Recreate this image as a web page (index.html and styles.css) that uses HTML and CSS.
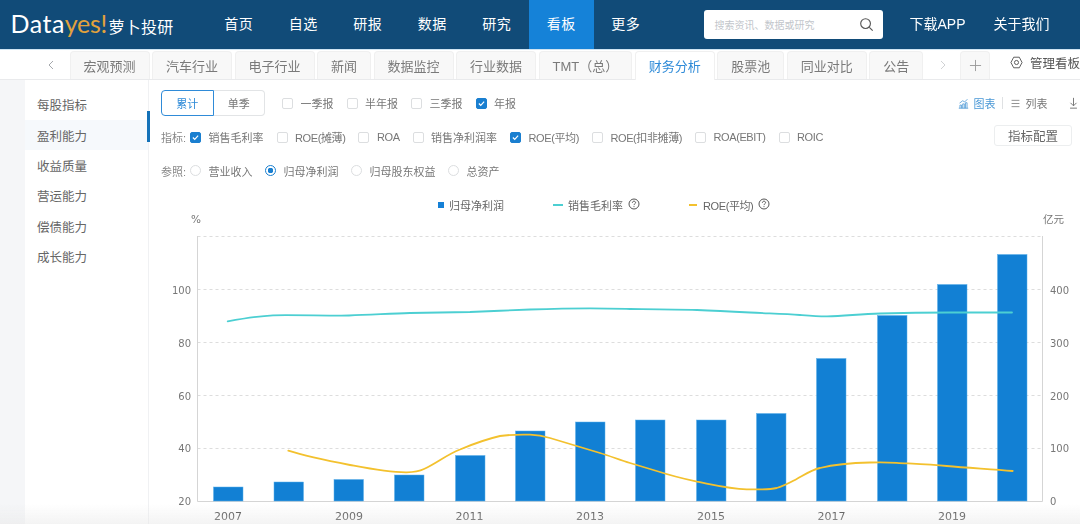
FILE: index.html
```html
<!DOCTYPE html>
<html lang="zh-CN">
<head>
<meta charset="utf-8">
<title>Datayes! 萝卜投研</title>
<link rel="stylesheet" href="styles.css">
</head>
<body>
<div class="app">
  <header class="header">
    <div class="logo"><span class="logo-data">Data</span><span class="logo-yes">yes!</span><span class="logo-cn">萝卜投研</span></div>
    <nav class="nav">
      <a class="nav-item">首页</a><a class="nav-item">自选</a><a class="nav-item">研报</a><a class="nav-item">数据</a><a class="nav-item">研究</a><a class="nav-item active">看板</a><a class="nav-item">更多</a>
    </nav>
    <div class="search">
      <span class="search-text">搜索资讯、数据或研究</span>
      <svg class="search-icon" viewBox="0 0 16 16"><circle cx="7" cy="7" r="5.2"/><path d="M11 11l3.6 3.6"/></svg>
    </div>
    <div class="header-links"><a>下载APP</a><a>关于我们</a></div>
  </header>

  <div class="tabbar">
    <svg class="tab-arrow first" viewBox="0 0 8 12"><path d="M6 2L2 6l4 4"/></svg>
    <div class="tabs">
      <span class="tab">宏观预测</span><span class="tab">汽车行业</span><span class="tab">电子行业</span><span class="tab">新闻</span><span class="tab">数据监控</span><span class="tab">行业数据</span><span class="tab">TMT（总）</span><span class="tab active">财务分析</span><span class="tab">股票池</span><span class="tab">同业对比</span><span class="tab">公告</span>
    </div>
    <svg class="tab-arrow last" viewBox="0 0 8 12"><path d="M2 2l4 4-4 4"/></svg>
    <span class="tab tab-add"><svg viewBox="0 0 14 14"><path d="M7 1v12M1 7h12"/></svg></span>
    <div class="manage">
      <svg viewBox="0 0 14 14"><path d="M4 1.3h6L13 7l-3 5.7H4L1 7z"/><circle cx="7" cy="7" r="2.2"/></svg>
      <span>管理看板</span>
    </div>
  </div>

  <div class="body">
    <aside class="sidebar">
      <div class="side-item">每股指标</div>
      <div class="side-item active">盈利能力</div>
      <div class="side-item">收益质量</div>
      <div class="side-item">营运能力</div>
      <div class="side-item">偿债能力</div>
      <div class="side-item">成长能力</div>
    </aside>
    <main class="main">
      <div class="row row-top">
        <div class="btn-group"><span class="seg active">累计</span><span class="seg">单季</span></div>
        <div class="opts period">
          <label class="opt"><i class="box"></i>一季报</label>
          <label class="opt"><i class="box"></i>半年报</label>
          <label class="opt"><i class="box"></i>三季报</label>
          <label class="opt"><i class="box on"><svg viewBox="0 0 12 12"><path d="M2.5 6l2.5 2.6 4.5-5"/></svg></i>年报</label>
        </div>
        <div class="views">
          <span class="view active"><svg viewBox="0 0 14 14"><path d="M1 13h12M2.5 13V9h2v4M6 13V7.5h2V13M9.5 13V6h2v7M2 6.5L6 3.5l2.5 1.5L12 1.5"/></svg>图表</span>
          <i class="view-sep"></i>
          <span class="view"><svg viewBox="0 0 14 14"><path d="M2 3h10M2 7h10M2 11h10"/></svg>列表</span>
          <svg class="download" viewBox="0 0 10 14"><path d="M5 1v9M1.5 6.8L5 10.3l3.5-3.5M1 13h8"/></svg>
        </div>
      </div>
      <div class="row row-metric">
        <span class="row-label">指标:</span>
        <div class="opts metrics">
          <label class="opt"><i class="box on"><svg viewBox="0 0 12 12"><path d="M2.5 6l2.5 2.6 4.5-5"/></svg></i>销售毛利率</label>
          <label class="opt"><i class="box"></i><span class="narrow">ROE(摊薄)</span></label>
          <label class="opt"><i class="box"></i><span class="narrow">ROA</span></label>
          <label class="opt"><i class="box"></i>销售净利润率</label>
          <label class="opt"><i class="box on"><svg viewBox="0 0 12 12"><path d="M2.5 6l2.5 2.6 4.5-5"/></svg></i><span class="narrow">ROE(平均)</span></label>
          <label class="opt"><i class="box"></i><span class="narrow">ROE(扣非摊薄)</span></label>
          <label class="opt"><i class="box"></i><span class="narrow">ROA(EBIT)</span></label>
          <label class="opt"><i class="box"></i><span class="narrow">ROIC</span></label>
        </div>
        <span class="config">指标配置</span>
      </div>
      <div class="row row-ref">
        <span class="row-label">参照:</span>
        <div class="opts refs">
          <label class="opt"><i class="radio"></i>营业收入</label>
          <label class="opt"><i class="radio on"></i>归母净利润</label>
          <label class="opt"><i class="radio"></i>归母股东权益</label>
          <label class="opt"><i class="radio"></i>总资产</label>
        </div>
      </div>
      <div class="legend">
        <span class="lg"><i class="lg-square"></i>归母净利润</span>
        <span class="lg"><i class="lg-dash teal"></i>销售毛利率<svg class="help" viewBox="0 0 12 12"><circle cx="6" cy="6" r="5"/><path d="M4.4 4.8C4.4 3.8 5.1 3.2 6 3.2s1.6.6 1.6 1.4c0 1.2-1.6 1.2-1.6 2.5M6 8.2v.9"/></svg></span>
        <span class="lg"><i class="lg-dash yellow"></i><span class="narrow">ROE(平均)</span><svg class="help" viewBox="0 0 12 12"><circle cx="6" cy="6" r="5"/><path d="M4.4 4.8C4.4 3.8 5.1 3.2 6 3.2s1.6.6 1.6 1.4c0 1.2-1.6 1.2-1.6 2.5M6 8.2v.9"/></svg></span>
      </div>
      <svg class="chart" viewBox="149 213 931 311">
        <text class="unit" x="191" y="223">%</text>
        <text class="unit" x="1043" y="223">亿元</text>

        <g class="grid">
          <path d="M197.5 236.5H1042.5"/>
          <path d="M197.5 289.5H1042.5"/>
          <path d="M197.5 342.5H1042.5"/>
          <path d="M197.5 395.5H1042.5"/>
          <path d="M197.5 448.5H1042.5"/>
        </g>
        <path class="axis" d="M197.5 236V501.5H1042.5V236"/>

        <g class="bars">
          <rect x="213.5" y="487" width="29.5" height="14"/>
          <rect x="274" y="482" width="29.5" height="19"/>
          <rect x="334" y="479.5" width="29.5" height="21.5"/>
          <rect x="394.5" y="475" width="29.5" height="26"/>
          <rect x="455.5" y="455.5" width="29.5" height="45.5"/>
          <rect x="515.5" y="431" width="29.5" height="70"/>
          <rect x="575.5" y="422" width="29.5" height="79"/>
          <rect x="635.5" y="420" width="29.5" height="81"/>
          <rect x="696.5" y="420" width="29.5" height="81"/>
          <rect x="756.5" y="413.5" width="29.5" height="87.5"/>
          <rect x="816.5" y="358.5" width="29.5" height="142.5"/>
          <rect x="877.5" y="315.5" width="29.5" height="185.5"/>
          <rect x="937.5" y="284.5" width="29.5" height="216.5"/>
          <rect x="997.5" y="254.5" width="29.5" height="246.5"/>
        </g>

        <path class="line line-teal" d="M227.7 321.3C243 318.5 258 316 273 315.3C290 314.8 330 315.8 349 315.5C370 315 390 313.5 410 313C430 312.5 450 312.5 470 312C490 311 510 310.5 530 309.5C550 308.8 570 308.3 590 308.3C610 308.3 620 308.7 630 309C650 309.2 675 309.3 697 310C715 310.6 732 311.5 750 312.5C770 313.5 785 314 800 315C810 315.8 818 316.5 827 316.4C845 316 860 314 880 313.5C905 312.8 930 312.5 950 312.5C970 312.4 990 312.5 1012 312.5"/>
        <path class="line line-yellow" d="M288.3 450.7C308 457 329 461 350 465S388 472.5 406.7 472.3C414 472.2 419 471.5 424 469C437 463 446 455 460 449.5C473 444 487 439 500 436C510 434.5 520 434.5 530 434.7C537 435 543 436 550 438C567 443 583 448 600 453C610 456 620 460 630 463C640 466 650 469 660 472C672 476 685 479 697 481.7C714 485 730 489 746.7 489.3C757 489.5 768 490 776.7 488C784 486 790 482.5 796.7 479C804 475 811 470 820 468C836 464 853 462.8 870 462.5C880 462.3 888 462.3 896.7 462.8C914 463.8 930 464.5 946.7 466C968 468 990 469 1012.7 471"/>

        <g class="ylabel left">
          <text x="191" y="294">100</text>
          <text x="191" y="347">80</text>
          <text x="191" y="400">60</text>
          <text x="191" y="452">40</text>
          <text x="191" y="505">20</text>
        </g>
        <g class="ylabel right">
          <text x="1050" y="294">400</text>
          <text x="1050" y="347">300</text>
          <text x="1050" y="400">200</text>
          <text x="1050" y="452">100</text>
          <text x="1050" y="505">0</text>
        </g>
        <g class="xlabel">
          <text x="228" y="520">2007</text>
          <text x="349" y="520">2009</text>
          <text x="469.5" y="520">2011</text>
          <text x="590" y="520">2013</text>
          <text x="711" y="520">2015</text>
          <text x="831.5" y="520">2017</text>
          <text x="952" y="520">2019</text>
        </g>
      </svg>
    </main>
  </div>
  <div class="bottom-fade"></div>
</div>
</body>
</html>
```

FILE: styles.css
```css
* { box-sizing: border-box; }
html, body { margin: 0; padding: 0; }
body {
  width: 1080px;
  height: 524px;
  overflow: hidden;
  background: #fff;
  font-family: "Liberation Sans", "Noto Sans CJK SC", sans-serif;
  color: #666;
}
.app {
  position: relative;
  width: 1080px;
  height: 524px;
  display: flex;
  flex-direction: column;
  overflow: hidden;
  filter: blur(0.35px);
}

/* header */
.header {
  flex: 0 0 49px;
  display: flex;
  align-items: center;
  background: #114b78;
  color: #fff;
}
.logo {
  width: 206.5px;
  flex: none;
  padding-left: 10.5px;
  padding-bottom: 4px;
  display: flex;
  align-items: baseline;
  white-space: nowrap;
}
.logo-data { font: 400 25px "Lato", sans-serif; color: #fff; letter-spacing: .5px; }
.logo-yes { font: 400 25px "Lato", sans-serif; color: #e3a23c; letter-spacing: -.3px; }
.logo-cn { font-size: 16px; margin-left: 1.5px; letter-spacing: .3px; }
.nav { display: flex; height: 49px; flex: none; }
.nav-item {
  width: 64.5px;
  padding-bottom: 3px;
  display: flex;
  align-items: center;
  justify-content: center;
  font-size: 14px;
  letter-spacing: .5px;
}
.nav-item.active { background: #1582d8; }
.search {
  flex: none;
  width: 179px;
  height: 29px;
  margin-left: 45.5px;
  padding: 0 9px 0 11px;
  background: #fff;
  border-radius: 3px;
  display: flex;
  align-items: center;
  justify-content: space-between;
}
.search-text { font-size: 10px; color: #c2c6cb; }
.search-icon { width: 15px; height: 15px; fill: none; stroke: #555; stroke-width: 1.2; }
.header-links { display: flex; gap: 28px; margin-left: 27px; padding-bottom: 3px; font-size: 14px; white-space: nowrap; }

/* tabs */
.tabbar {
  flex: 0 0 31px;
  display: flex;
  align-items: flex-end;
  position: relative;
  background: #fff;
  border-top: 1px solid #cfe4f3;
  border-bottom: 1px solid #e9eaec;
}
.tab-arrow { flex: none; width: 8px; height: 12px; fill: none; stroke: #a5a8ac; stroke-width: 1; align-self: center; }
.tab-arrow.first { margin-left: 47px; }
.tab-arrow.last { margin-left: 16px; stroke: #d0d2d4; }
.tabs { display: flex; flex: none; gap: 2.5px; margin-left: 14.5px; }
.tab {
  flex: none;
  height: 28px;
  padding: 0 13px 1px;
  display: flex;
  align-items: center;
  font-size: 13px;
  color: #7a7a7a;
  background: #f8f8f8;
  border: 1px solid #f0f0f0;
  border-bottom: 0;
  border-radius: 4px 4px 0 0;
  white-space: nowrap;
}
.tab.active { background: #fff; color: #2f8bd8; height: 29px; margin-bottom: -1px; }
.tab-add { width: 30px; padding: 0; margin-left: 13px; justify-content: center; }
.tab-add svg { width: 13px; height: 13px; fill: none; stroke: #999; stroke-width: 1; }
.manage {
  display: flex;
  flex: none;
  align-items: center;
  gap: 7px;
  margin-left: 19.5px;
  align-self: center;
  margin-top: -4px;
  white-space: nowrap;
  font-size: 12.5px;
  color: #555;
}
.manage svg { width: 13px; height: 13px; fill: none; stroke: #555; stroke-width: 1; flex: none; }

/* body */
.body { flex: 1; display: flex; background: #f5f6f8; min-height: 0; }
.sidebar {
  flex: none;
  width: 124px;
  margin-left: 25px;
  padding-top: 9.5px;
  background: #fff;
  border-right: 1px solid #f0f1f3;
  position: relative;
}
.side-item {
  height: 30.4px;
  padding-left: 12px;
  display: flex;
  align-items: center;
  font-size: 12.5px;
  color: #666;
}
.side-item.active { background: #f6f9fc; position: relative; }
.side-item.active::after {
  content: "";
  position: absolute;
  right: -2px;
  top: -9px;
  width: 3.5px;
  height: 31px;
  background: #1472b8;
}
.main { flex: 1; min-width: 0; background: #fff; display: flex; flex-direction: column; }

.row { display: flex; align-items: center; padding-left: 12px; font-size: 11px; color: #777; }
.row-top { height: 27px; margin-top: 9.5px; }
.row-metric { height: 22px; margin-top: 9.5px; }
.row-ref { height: 14px; margin-top: 15.5px; }

.btn-group { display: flex; flex: none; }
.seg {
  width: 51.5px;
  height: 26px;
  display: flex;
  align-items: center;
  justify-content: center;
  border: 1px solid #e2e4e6;
  border-left: 0;
  border-radius: 0 4px 4px 0;
  color: #777;
}
.seg.active {
  width: 52.5px;
  color: #2f8bd8;
  border: 1px solid #2f8bd8;
  border-radius: 4px 0 0 4px;
}
.opts { display: flex; flex: none; }
.opt { display: flex; align-items: center; gap: 7.5px; white-space: nowrap; color: #777; }
.period { gap: 13px; margin-left: 17px; }
.metrics { gap: 13px; margin-left: 4px; }
.refs { gap: 12.5px; margin-left: 4px; }
.narrow { letter-spacing: -.4px; }
.box {
  width: 11px;
  height: 11px;
  border: 1px solid #dcdee0;
  border-radius: 2px;
  background: #fff;
  flex: none;
  display: block;
}
.box.on { background: #1a7fd0; border-color: #1a7fd0; }
.box svg { display: block; width: 9px; height: 9px; fill: none; stroke: #fff; stroke-width: 1.6; }
.radio {
  width: 11px;
  height: 11px;
  border: 1px solid #dcdee0;
  border-radius: 50%;
  flex: none;
  display: block;
}
.radio.on { border-color: #1a7fd0; background: radial-gradient(circle, #1a7fd0 0 2.6px, #fff 3px); }
.row-label { color: #888; }

.views { margin-left: auto; display: flex; align-items: center; }
.view { display: flex; align-items: center; gap: 5px; color: #777; }
.view.active { color: #4a98d6; }
.view svg { width: 11px; height: 11px; fill: none; stroke: currentColor; stroke-width: 1; }
.view-sep { width: 1px; height: 12px; background: #dfe1e3; margin: 0 7px 0 6px; }
.download { flex: none; width: 9px; height: 12px; fill: none; stroke: #666; stroke-width: 1; margin-left: 21.5px; margin-right: 2px; }

.config {
  flex: none;
  margin-left: auto;
  margin-right: 8px;
  margin-top: -3px;
  width: 78px;
  height: 21px;
  display: flex;
  align-items: center;
  justify-content: center;
  border: 1px solid #eceeef;
  border-radius: 3px;
  font-size: 12.5px;
  color: #666;
}

.legend {
  display: flex;
  align-items: center;
  height: 14px;
  margin-top: 20px;
  padding-left: 289px;
  font-size: 11px;
  color: #666;
}
.lg { display: flex; align-items: center; white-space: nowrap; }
.lg + .lg { margin-left: 49px; }
.lg-square { width: 6px; height: 6px; background: #1580d6; margin-right: 5px; }
.lg-dash { width: 10px; height: 2px; margin-right: 5px; }
.lg-dash.teal { background: #4ccfd2; }
.lg-dash.yellow { background: #f3c12e; margin-right: 6px; width: 8px; }
.help { width: 12px; height: 12px; margin: -2px 0 0 5px; fill: none; stroke: #555; stroke-width: 1; }

.chart { flex: none; width: 931px; height: 311px; margin-top: 1px; display: block; overflow: hidden; }
.unit { font-size: 10.5px; fill: #777; font-family: "DejaVu Sans", "Noto Sans CJK SC", sans-serif; }
.grid path { fill: none; stroke: #ddd; stroke-width: 1; stroke-dasharray: 3 3; }
.axis { fill: none; stroke: #d5d5d5; stroke-width: 1; }
.bars rect { fill: #1280d4; stroke: #5ab0ea; stroke-width: .5; }
.line { fill: none; stroke-width: 1.8; stroke-linecap: round; }
.line-teal { stroke: #4ccfd2; }
.line-yellow { stroke: #f3c12e; }
.ylabel text { font: 10px "DejaVu Sans", sans-serif; fill: #777; }
.ylabel.left text { text-anchor: end; }
.xlabel text { font: 11px "DejaVu Sans", sans-serif; fill: #444; text-anchor: middle; }

.bottom-fade {
  position: absolute;
  left: 0;
  right: 0;
  bottom: 0;
  height: 20px;
  background: linear-gradient(rgba(238, 238, 238, 0), rgba(232, 232, 232, .5));
  pointer-events: none;
}
```
